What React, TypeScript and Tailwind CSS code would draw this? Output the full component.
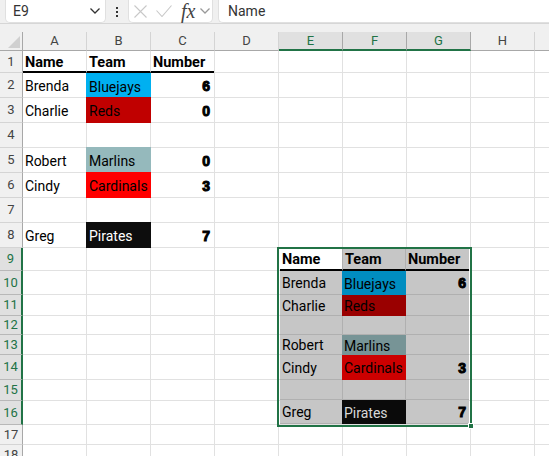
import React from "react";

const cols = ["A", "B", "C", "D", "E", "F", "G", "H", ""];

type Row = { n: number; h: string; name?: string; team?: string; fill?: string; num?: string; head?: boolean };

const rows: Row[] = [
  { n: 1, h: "h-[22px]", name: "Name", team: "Team", num: "Number", head: true },
  { n: 2, h: "h-[25px]", name: "Brenda", team: "Bluejays", fill: "bg-[#00b0f0] text-black", num: "6" },
  { n: 3, h: "h-[25px]", name: "Charlie", team: "Reds", fill: "-mt-px bg-[#c00000] text-black", num: "0" },
  { n: 4, h: "h-[25px]" },
  { n: 5, h: "h-[25px]", name: "Robert", team: "Marlins", fill: "-mt-px bg-[#95b9bc] text-black", num: "0" },
  { n: 6, h: "h-[25px]", name: "Cindy", team: "Cardinals", fill: "-mt-px bg-[#ff0000] text-black", num: "3" },
  { n: 7, h: "h-[25px]" },
  { n: 8, h: "h-[25px]", name: "Greg", team: "Pirates", fill: "-mt-px bg-[#0d0d0d] text-white", num: "7" },
  { n: 9, h: "h-[23px]" },
  { n: 10, h: "h-[24px]" },
  { n: 11, h: "h-[21px]" },
  { n: 12, h: "h-[19px]" },
  { n: 13, h: "h-[20px]" },
  { n: 14, h: "h-[25px]" },
  { n: 15, h: "h-[21px]" },
  { n: 16, h: "h-[24px]" },
  { n: 17, h: "h-[20px]" },
  { n: 18, h: "h-[20px]" },
];

const linked = [
  { h: "h-[22px]", name: "Name", team: "Team", num: "Number", head: true },
  { h: "h-[24px]", name: "Brenda", team: "Bluejays", fill: "bg-[#008dc0] text-black", num: "6" },
  { h: "h-[21px]", name: "Charlie", team: "Reds", fill: "bg-[#9a0000] text-black" },
  { h: "h-[19px]" },
  { h: "h-[20px]", name: "Robert", team: "Marlins", fill: "bg-[#779496] text-black" },
  { h: "h-[25px]", name: "Cindy", team: "Cardinals", fill: "bg-[#cc0000] text-black", num: "3" },
  { h: "h-[20px]" },
  { h: "h-[24px]", name: "Greg", team: "Pirates", fill: "bg-[#0a0a0a] text-[#d8d8d8]", num: "7" },
];

const heavy = "font-['Liberation_Sans',sans-serif] font-bold text-[14px] [-webkit-text-stroke:1px_black]";

const Chevron = ({ className }: { className: string }) => (
  <svg width="10" height="6" viewBox="0 0 10 6" fill="none" stroke="currentColor" strokeWidth="1.3" className={className}>
    <path d="M0.5 0.5L5 5L9.5 0.5" />
  </svg>
);

const FormulaBar = () => (
  <div className="flex h-[24px] items-stretch border-b border-[#d6d6d6] bg-[#f0f0f0]">
    <div className="ml-[5px] flex w-[101px] items-center justify-between rounded-b-[5px] border-x border-b border-[#e0e0e0] bg-white pl-[7px] pr-[5px] text-[14px] text-[#333]">
      E9
      <Chevron className="text-[#333]" />
    </div>
    <div className="flex w-[22px] flex-col items-center justify-center gap-[2px]">
      <span className="size-[2px] bg-[#333]" />
      <span className="size-[2px] bg-[#333]" />
      <span className="size-[2px] bg-[#333]" />
    </div>
    <div className="flex w-[85px] items-center rounded-b-[5px] border-x border-b border-[#e0e0e0] bg-white pl-[5px] text-[#c8c8c8]">
      <svg width="13" height="13" viewBox="0 0 13 13" fill="none" stroke="currentColor" strokeWidth="1.1">
        <path d="M0.5 0.5L12.5 12.5M12.5 0.5L0.5 12.5" />
      </svg>
      <svg width="16" height="12" viewBox="0 0 16 12" fill="none" stroke="currentColor" strokeWidth="1.1" className="ml-[9px]">
        <path d="M0.5 5.5L6 11.5L15.5 0.5" />
      </svg>
      <span className="ml-[9px] font-['Liberation_Serif',serif] text-[20px] italic leading-none text-[#444]">fx</span>
      <Chevron className="ml-[5px] text-[#999]" />
    </div>
    <div className="ml-[5px] flex flex-1 items-center rounded-bl-[5px] border-b border-l border-[#e0e0e0] bg-white pl-[9px] text-[14px] text-[#333]">
      Name
    </div>
  </div>
);

const ColumnHeaders = () => (
  <div className="flex h-[27px] items-end bg-[#f0f0f0]">
    <div className="flex h-[19px] w-[23px] shrink-0 items-end justify-end border-r border-b border-[#a8a8a8] p-[2px]">
      <div className="size-[12px] bg-[#d0d0d0] [clip-path:polygon(100%_0,100%_100%,0_100%)]" />
    </div>
    {cols.map((c, i) => {
      const on = c === "E" || c === "F" || c === "G";
      return (
        <div
          key={i}
          className={
            on
              ? "flex h-[19px] w-[64px] shrink-0 items-center justify-center border-r border-b-2 border-r-[#a8a8a8] border-b-[#217346] bg-[#e0e0e0] text-[13px] text-[#217346]"
              : "flex h-[19px] w-[64px] shrink-0 items-center justify-center border-r border-b border-r-[#d4d4d4] border-b-[#a8a8a8] text-[13px] text-[#444]"
          }
        >
          {c}
        </div>
      );
    })}
  </div>
);

const SheetRow = ({ row }: { row: Row }) => {
  const on = row.n >= 9 && row.n <= 16;
  const line = row.head ? "border-b-2 border-b-black" : "border-b border-b-[#e1e1e1]";
  const size = row.head ? "text-[14.5px] font-bold" : "text-[14px]";
  return (
    <div className={`flex ${row.h}`}>
      <div
        className={
          on
            ? "flex w-[23px] shrink-0 items-center justify-center border-r-2 border-b border-r-[#217346] border-b-[#b8b8b8] bg-[#e0e0e0] text-[13px] text-[#217346]"
            : "flex w-[23px] shrink-0 items-center justify-center border-r border-b border-r-[#a8a8a8] border-b-[#d4d4d4] bg-[#f0f0f0] text-[13px] text-[#444]"
        }
      >
        {row.n}
      </div>
      <div className={`flex w-[63px] shrink-0 items-center pl-[2px] pt-[3px] ${size} ${line}`}>{row.name}</div>
      {row.fill ? (
        <div className={`flex w-[65px] shrink-0 items-center whitespace-nowrap pl-[3px] pt-[3px] ${size} ${row.fill}`}>{row.team}</div>
      ) : (
        <div className={`flex w-[65px] shrink-0 items-center border-x border-x-[#e1e1e1] pl-[2px] pt-[3px] ${size} ${line}`}>{row.team}</div>
      )}
      <div className={`flex w-[63px] shrink-0 items-center pl-[2px] pr-[4px] pt-[3px] ${size} ${line} ${row.head ? "" : `justify-end ${heavy}`}`}>
        {row.num}
      </div>
      <div className="w-[1px] shrink-0 border-r border-b border-[#e1e1e1]" />
      {cols.slice(3).map((c, i) => (
        <div key={i} className="w-[64px] shrink-0 border-r border-b border-[#e1e1e1]" />
      ))}
    </div>
  );
};

const LinkedPicture = () => (
  <div className="absolute left-[277px] top-[247px] w-[195px] border-2 border-[#217346] p-px">
    {linked.map((r, i) => {
      const size = r.head ? "text-[14.5px] font-bold" : "text-[14px]";
      return (
        <div key={i} className={`flex ${r.h} ${i === 0 ? "-mt-px" : ""}`}>
          <div className={`flex w-[62px] items-center pl-[2px] pt-[2px] ${size} ${r.head ? "border-b-2 border-b-black bg-white" : "border-b border-b-[#b0b0b0] bg-[#c6c6c6]"}`}>
            {r.name}
          </div>
          <div className={`flex w-[64px] items-center whitespace-nowrap pl-[2px] pt-[2px] ${size} ${r.head ? "border-x border-x-[#b0b0b0] border-b-2 border-b-black bg-[#c6c6c6]" : ""} ${r.fill ?? (r.head ? "" : "border-x border-x-[#b0b0b0] border-b border-b-[#b0b0b0] bg-[#c6c6c6]")}`}>
            {r.team}
          </div>
          <div className={`flex w-[63px] items-center bg-[#c6c6c6] pl-[2px] pr-[3px] pt-[2px] ${size} ${r.head ? "border-b-2 border-b-black" : `justify-end border-b border-b-[#b0b0b0] ${heavy}`}`}>
            {r.num}
          </div>
        </div>
      );
    })}
    {/* fill handle */}
    <div className="absolute -bottom-[4px] -right-[4px] size-[6px] border border-white bg-[#217346]" />
  </div>
);

const App = () => {
  return (
    <div className="relative h-[456px] w-[549px] overflow-hidden bg-white font-['Roboto',sans-serif] text-black">
      <FormulaBar />
      <ColumnHeaders />
      {rows.map((row) => (
        <SheetRow key={row.n} row={row} />
      ))}
      <LinkedPicture />
    </div>
  );
};

export default App;
